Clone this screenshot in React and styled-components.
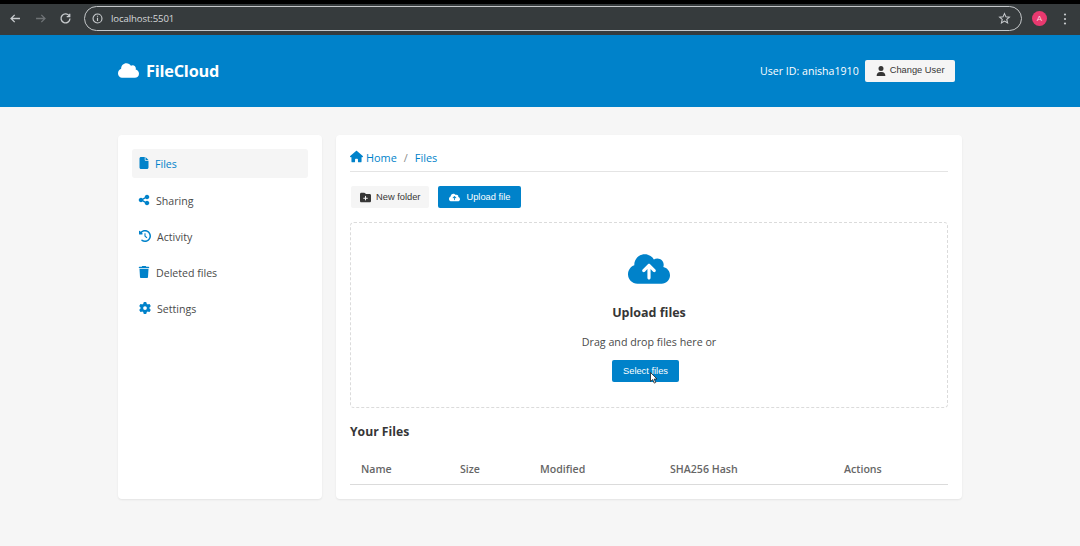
import React from "react";
import styled, { createGlobalStyle } from "styled-components";
import { FaCloud, FaUser, FaFile, FaShareNodes, FaClockRotateLeft, FaTrash, FaGear, FaHouse, FaFolderPlus, FaCloudArrowUp } from "react-icons/fa6";

const Global = createGlobalStyle`
  html, body { margin: 0; padding: 0; height: 546px; overflow: hidden; background: #f6f6f6; }
  body { font-family: "Open Sans", "Noto Sans", sans-serif; color: #333; }
  * { box-sizing: border-box; }
`;
const Page = styled.div`width: 1080px; height: 546px; display: flex; flex-direction: column; overflow: hidden;`;
const Chrome = styled.div`
  height: 35px; flex: none; background: #363b3d; border-top: 4px solid #000;
  display: flex; align-items: center; padding: 0 9px 2px 9px;
`;
const NavIcon = styled.svg`width: 13px; height: 13px; flex: none; margin-right: ${p => p.$mr || 0}px; color: ${p => p.$dim ? "#6f7376" : "#c8cbce"};`;
const Omni = styled.div`
  margin-left: 12px; flex: 1; height: 25px; border: 1.5px solid #c5c8ca; border-radius: 13px;
  display: flex; align-items: center; padding: 0 10px 0 6px; color: #d5d8da; font-size: 9.6px;
`;
const OmniText = styled.span`margin-left: 7px; font-family: "Open Sans", sans-serif; letter-spacing: -0.1px;`;
const Spacer = styled.div`flex: 1;`;
const Avatar = styled.div`
  width: 15px; height: 15px; border-radius: 50%; background: #e8396f; color: #f8d0dc; font-size: 8px;
  display: flex; align-items: center; justify-content: center; margin-left: 10px; font-family: "Liberation Sans", sans-serif;
`;
const Dots = styled.svg`width: 4px; height: 12px; margin-left: 16px; margin-right: 4px; color: #c8cbce; flex: none;`;
const Header = styled.header`
  height: 72px; flex: none; background: #0082ca; color: #fff;
  display: flex; align-items: center; justify-content: space-between; padding: 0 125px 1px 118px;
`;
const Logo = styled.div`display: flex; align-items: center; gap: 7px; font-size: 16.3px; font-weight: 700; letter-spacing: -0.2px;
  svg { font-size: 21px; }
`;
const UserBox = styled.div`display: flex; align-items: center; gap: 6.5px; font-size: 10.6px;`;
const Button = styled.button`
  height: 22px; border: none; border-radius: 2px; padding: 0 ${p => p.$px || 10}px;
  display: inline-flex; align-items: center; gap: ${p => p.$gap || 6}px; font-family: "Liberation Sans", sans-serif; font-size: 9.3px;
  background: ${p => p.$primary ? "#0082ca" : "#f5f5f5"}; color: ${p => p.$primary ? "#fff" : "#363636"};
  svg { font-size: ${p => p.$icon || 11}px; }
  span { position: relative; top: -0.5px; }
`;
const Body = styled.div`display: flex; gap: 14px; padding: 28px 118px 0; align-items: stretch;`;
const Sidebar = styled.aside`
  width: 204px; height: 364px; flex: none; background: #fff; border-radius: 4px; box-shadow: 0 1px 2px rgba(0,0,0,.08);
  padding: 14px; display: flex; flex-direction: column; gap: 7px;
`;
const MenuItem = styled.div`
  height: 29px; flex: none; border-radius: 3px; padding: 0 7px; display: flex; align-items: center; gap: ${p => p.$gap || 6}px; font-size: 10.6px;
  margin-bottom: ${p => p.$active ? 1 : 0}px;
  background: ${p => p.$active ? "#f5f5f5" : "transparent"}; color: ${p => p.$active ? "#0082ca" : "#4a4a4a"};
  svg { color: #0082ca; font-size: 12px; flex: none; position: relative; top: -1px; margin-left: ${p => p.$shift || 0}px; }
`;
const Main = styled.main`
  width: 626px; height: 364px; background: #fff; border-radius: 4px; box-shadow: 0 1px 2px rgba(0,0,0,.08);
  padding: 14px;
`;
const Crumbs = styled.nav`
  height: 23px; border-bottom: 1px solid #e4e4e4; display: flex; align-items: flex-start; font-size: 10.9px; color: #0082ca; line-height: 17px;
  svg { font-size: 13px; margin: 1px 3px 0 0; }
`;
const Sep = styled.span`margin: 0 7px; color: #8a8a8a;`;
const Actions = styled.div`display: flex; gap: 9px; margin-top: 14px; margin-left: 1px;`;
const Drop = styled.section`
  margin-top: 14px; height: 186px; border: 1.5px dashed #dbdbdb; border-radius: 4px;
  display: flex; flex-direction: column; align-items: center; padding-top: 28px;
`;
const BigIcon = styled.div`height: 36px; color: #0082ca; font-size: 42px; line-height: 0; svg { display: block; margin-top: -3px; }`;
const DropTitle = styled.h2`margin: 17px 0 0; font-size: 12.5px; line-height: 18px; font-weight: 700; color: #363636;`;
const DropText = styled.p`margin: 12px 0 0; font-size: 10.7px; line-height: 16px; color: #4a4a4a;`;
const SelectWrap = styled.div`position: relative; margin-top: 7px; margin-left: -7px;`;
const Cursor = styled.svg`position: absolute; left: 38px; top: 15px; width: 8px; height: 12px;`;
const Title = styled.h3`margin: 15px 0 0; font-size: 12.2px; line-height: 18px; font-weight: 700; color: #363636;`;
const TableHead = styled.div`
  margin-top: 13px; height: 31px; border-bottom: 1px solid #dbdbdb;
  display: grid; grid-template-columns: 99px 80px 130px 174px 1fr; padding-left: 11px;
  align-items: center; font-size: 10.6px; font-weight: 600; color: #666;
`;

const Arrow = ({ flip, dim, mr }) => (
  <NavIcon viewBox="0 0 16 16" $dim={dim} $mr={mr} fill="none" stroke="currentColor" strokeWidth="1.6">
    <path d={flip ? "M2.5 8h11M9 3.5 13.5 8 9 12.5" : "M13.5 8h-11M7 3.5 2.5 8 7 12.5"} />
  </NavIcon>
);

export default function App() {
  return (
    <Page>
      <Global />
      <Chrome>
        <Arrow mr={12} />
        <Arrow flip dim mr={12} />
        <NavIcon viewBox="0 0 16 16" fill="none" stroke="currentColor" strokeWidth="1.6">
          <path d="M12.8 5.2A5.500 5.500 0 1 0 13.500 8" />
          <path d="M13.200 2v3.700H9.500" />
        </NavIcon>
        <Omni>
          <NavIcon viewBox="0 0 16 16" fill="none" stroke="currentColor" strokeWidth="1.4">
            <circle cx="8" cy="8" r="5.500" />
            <path d="M8 7v4M8 4.600v1.200" />
          </NavIcon>
          <OmniText>localhost:5501</OmniText>
          <Spacer />
          <NavIcon viewBox="0 0 16 16" fill="none" stroke="currentColor" strokeWidth="1.3">
            <path d="m8 2 1.800 4 4.200.4-3.200 2.800 1 4.300L8 11.200l-3.800 2.300 1-4.300L2 6.400 6.200 6z" />
          </NavIcon>
        </Omni>
        <Avatar>A</Avatar>
        <Dots viewBox="0 0 4 12" fill="currentColor">
          <circle cx="2" cy="1.500" r="1.100" />
          <circle cx="2" cy="6" r="1.100" />
          <circle cx="2" cy="10.500" r="1.100" />
        </Dots>
      </Chrome>
      <Header>
        <Logo><FaCloud />FileCloud</Logo>
        <UserBox>
          User ID: anisha1910
          <Button $gap={4} $icon={10} $px={10.5}><FaUser /><span>Change User</span></Button>
        </UserBox>
      </Header>
      <Body>
        <Sidebar>
          <MenuItem $active $shift={-1} $gap={5}><FaFile />Files</MenuItem>
          <MenuItem $shift={-1}><FaShareNodes />Sharing</MenuItem>
          <MenuItem><FaClockRotateLeft />Activity</MenuItem>
          <MenuItem $shift={-1}><FaTrash />Deleted files</MenuItem>
          <MenuItem><FaGear />Settings</MenuItem>
        </Sidebar>
        <Main>
          <Crumbs><FaHouse />Home<Sep>/</Sep>Files</Crumbs>
          <Actions>
            <Button $px={9} $gap={5}><FaFolderPlus /><span>New folder</span></Button>
            <Button $primary $px={11}><FaCloudArrowUp /><span>Upload file</span></Button>
          </Actions>
          <Drop>
            <BigIcon><FaCloudArrowUp /></BigIcon>
            <DropTitle>Upload files</DropTitle>
            <DropText>Drag and drop files here or</DropText>
            <SelectWrap>
              <Button $primary $px={11}><span>Select files</span></Button>
              <Cursor viewBox="0 0 8 12">
                <path d="M.5.5v9l2.200-2 1.500 3.600 1.500-.6L4.200 7H7z" fill="#fff" stroke="#222" strokeWidth=".8" />
              </Cursor>
            </SelectWrap>
          </Drop>
          <Title>Your Files</Title>
          <TableHead>
            <span>Name</span>
            <span>Size</span>
            <span>Modified</span>
            <span>SHA256 Hash</span>
            <span>Actions</span>
          </TableHead>
        </Main>
      </Body>
    </Page>
  );
}
